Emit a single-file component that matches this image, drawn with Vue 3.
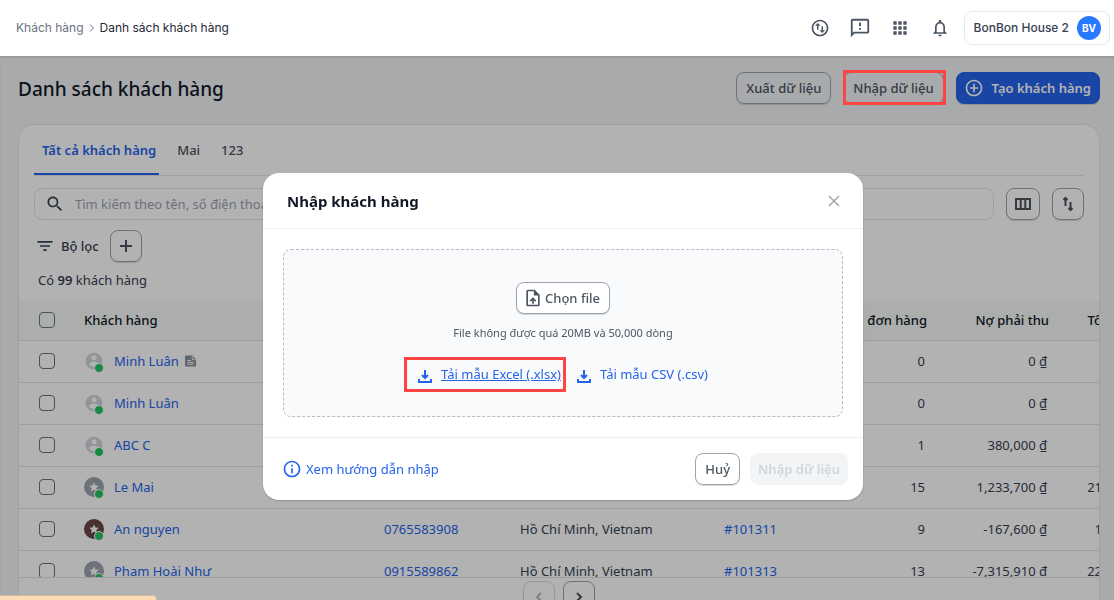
<template>
  <div class="app">
    <header class="topbar">
      <nav class="breadcrumb" aria-label="Breadcrumb">
        <a href="#">Khách hàng</a>
        <svg class="crumb-arrow" viewBox="0 0 8 8" aria-hidden="true"><path d="M2 0.500L5.500 4 2 7.500" /></svg>
        <span>Danh sách khách hàng</span>
      </nav>
      <div class="topbar-right">
        <button v-for="item in topIcons" :key="item.icon" class="icon-btn" :aria-label="item.label">
          <svg class="icon" :class="item.icon" viewBox="0 0 24 24"><path :d="icons[item.icon]" /></svg>
        </button>
        <button class="account">
          <span>BonBon House 2</span>
          <span class="account-avatar">BV</span>
        </button>
      </div>
    </header>

    <main class="page">
      <div class="page-head">
        <h1>Danh sách khách hàng</h1>
        <div class="page-actions">
          <button class="btn">Xuất dữ liệu</button>
          <div class="marked">
            <button class="btn" @click="showModal = true">Nhập dữ liệu</button>
          </div>
          <button class="btn btn-primary">
            <svg class="icon" viewBox="0 0 24 24"><path :d="icons.addCircle" /></svg>
            <span>Tạo khách hàng</span>
          </button>
        </div>
      </div>

      <section class="card">
        <div class="card-top">
          <div class="tabs" role="tablist">
            <button
              v-for="tab in tabs"
              :key="tab"
              class="tab"
              :class="{ active: tab === activeTab }"
              role="tab"
              :aria-selected="tab === activeTab"
              @click="activeTab = tab"
            >{{ tab }}</button>
          </div>

          <div class="search-row">
            <label class="search">
              <svg class="icon" viewBox="0 0 24 24"><path :d="icons.search" /></svg>
              <input v-model="keyword" type="text" aria-label="Tìm kiếm" placeholder="Tìm kiếm theo tên, số điện thoại, email khách hàng" />
            </label>
            <button class="btn btn-tool columns" aria-label="Cột hiển thị">
              <svg viewBox="0 0 16 14"><path d="M1 2h14v10H1zM5.7 2v10M10.3 2v10" /></svg>
            </button>
            <button class="btn btn-tool" aria-label="Sắp xếp">
              <svg viewBox="0 0 16 16"><path d="M5.500 10V2M3.500 4l2-2 2 2M10.500 6v8M8.500 12l2 2 2-2" /></svg>
            </button>
          </div>

          <div class="filter-row">
            <svg class="icon" viewBox="0 0 24 24"><path :d="icons.filter" /></svg>
            <span>Bộ lọc</span>
            <button class="btn btn-tool" aria-label="Thêm bộ lọc">
              <svg viewBox="0 0 16 16"><path d="M8 2v12M2 8h12" /></svg>
            </button>
          </div>
          <p class="count">Có <b>99</b> khách hàng</p>
        </div>

        <div class="table-wrap">
          <table>
            <colgroup>
              <col class="c-check" />
              <col class="c-name" />
              <col class="c-phone" />
              <col class="c-address" />
              <col class="c-last" />
              <col class="c-orders" />
              <col class="c-debt" />
              <col class="c-total" />
            </colgroup>
            <thead>
              <tr>
                <th><input type="checkbox" aria-label="Chọn tất cả" /></th>
                <th>Khách hàng</th>
                <th>Số điện thoại</th>
                <th>Địa chỉ</th>
                <th>Đơn cuối</th>
                <th class="num">đơn hàng</th>
                <th class="num">Nợ phải thu</th>
                <th class="num">Tổng chi tiêu</th>
              </tr>
            </thead>
            <tbody>
              <tr v-for="(c, i) in customers" :key="i">
                <td><input type="checkbox" :aria-label="'Chọn ' + c.name" /></td>
                <td>
                  <div class="customer">
                    <span class="avatar" :class="c.avatar">
                      <svg v-if="c.avatar === 'person'" viewBox="0 0 24 24"><path :d="icons.person" /></svg>
                      <svg v-else viewBox="0 0 24 24"><path :d="icons.star" /></svg>
                    </span>
                    <a href="#">{{ c.name }}</a>
                    <svg v-if="c.note" class="note" viewBox="0 0 12 12">
                      <path d="M1 0h7l4 4v8H0V1q0-1 1-1z" />
                      <path class="note-lines" d="M2.500 5.500h4M2.500 7.500h7M2.500 9.500h7M8 1v3.500h3.500" />
                    </svg>
                  </div>
                </td>
                <td><a href="#">{{ c.phone }}</a></td>
                <td>{{ c.address }}</td>
                <td><a href="#">{{ c.lastOrder }}</a></td>
                <td class="num">{{ c.orders }}</td>
                <td class="num">{{ c.debt }} ₫</td>
                <td class="num">{{ c.total }} ₫</td>
              </tr>
            </tbody>
          </table>
        </div>

        <div class="pager">
          <button class="btn btn-tool" disabled aria-label="Trang trước">
            <svg viewBox="0 0 16 16"><path d="M10 4L6 8l4 4" /></svg>
          </button>
          <button class="btn btn-tool" aria-label="Trang sau">
            <svg viewBox="0 0 16 16"><path d="M6 4l4 4-4 4" /></svg>
          </button>
        </div>
      </section>
    </main>

    <div v-if="showModal" class="overlay">
      <div class="modal" role="dialog" aria-modal="true" aria-labelledby="modal-title">
        <div class="modal-head">
          <h2 id="modal-title">Nhập khách hàng</h2>
          <button class="close" aria-label="Đóng" @click="showModal = false">
            <svg viewBox="0 0 12 12"><path d="M1 1l10 10M11 1L1 11" /></svg>
          </button>
        </div>
        <div class="modal-body">
          <div class="dropzone">
            <button class="btn btn-file">
              <svg class="icon" viewBox="0 0 24 24"><path :d="icons.upload" /></svg>
              <span>Chọn file</span>
            </button>
            <p class="hint">File không được quá 20MB và 50,000 dòng</p>
            <div class="templates">
              <a class="template marked" href="#">
                <svg viewBox="0 0 14 14"><path d="M7 1v7.500M4 6l3 3 3-3M1 10v3h12v-3" /></svg>
                <span class="underlined">Tải mẫu Excel (.xlsx)</span>
              </a>
              <a class="template" href="#">
                <svg viewBox="0 0 14 14"><path d="M7 1v7.500M4 6l3 3 3-3M1 10v3h12v-3" /></svg>
                <span>Tải mẫu CSV (.csv)</span>
              </a>
            </div>
          </div>
        </div>
        <div class="modal-foot">
          <a class="guide" href="#">
            <svg class="icon" viewBox="0 0 24 24"><path :d="icons.info" /></svg>
            <span>Xem hướng dẫn nhập</span>
          </a>
          <div class="modal-actions">
            <button class="btn" @click="showModal = false">Huỷ</button>
            <button class="btn btn-disabled" disabled>Nhập dữ liệu</button>
          </div>
        </div>
      </div>
    </div>

    <div class="notice"></div>
  </div>
</template>

<script setup>
import { ref } from 'vue';

const showModal = ref(true);
const keyword = ref('');
const tabs = ['Tất cả khách hàng', 'Mai', '123'];
const activeTab = ref(tabs[0]);

const topIcons = [
  { icon: 'transfer', label: 'Giao dịch' },
  { icon: 'feedback', label: 'Góp ý' },
  { icon: 'apps', label: 'Ứng dụng' },
  { icon: 'bell', label: 'Thông báo' }
];

const ring = 'M12 2C6.48 2 2 6.48 2 12s4.48 10 10 10 10-4.48 10-10S17.52 2 12 2zm0 18c-4.41 0-8-3.59-8-8s3.59-8 8-8 8 3.59 8 8-3.59 8-8 8z';

const icons = {
  transfer: ring + 'M9.300 6L6 9.300h2.400V14h1.800V9.300h2.400zM14.700 18l3.300-3.300h-2.400V10h-1.800v4.700h-2.400z',
  feedback: 'M20 2H4c-1.100 0-1.990.9-1.990 2L2 22l4-4h14c1.100 0 2-.9 2-2V4c0-1.100-.9-2-2-2zm0 14H5.170L4 17.170V4h16v12zm-9-4h2v2h-2zm0-6h2v4h-2z',
  apps: 'M4 8h4V4H4v4zm6 12h4v-4h-4v4zm-6 0h4v-4H4v4zm0-6h4v-4H4v4zm6 0h4v-4h-4v4zm6-10v4h4V4h-4zm-6 4h4V4h-4v4zm6 6h4v-4h-4v4zm0 6h4v-4h-4v4z',
  bell: 'M12 22c1.100 0 2-.9 2-2h-4c0 1.100.9 2 2 2zm6-6v-5c0-3.070-1.630-5.640-4.500-6.320V4c0-.83-.67-1.500-1.500-1.500s-1.500.67-1.500 1.500v.68C7.640 5.360 6 7.920 6 11v5l-2 2v1h16v-1l-2-2zm-2 1H8v-6c0-2.480 1.510-4.500 4-4.500s4 2.020 4 4.500v6z',
  addCircle: 'M13 7h-2v4H7v2h4v4h2v-4h4v-2h-4V7z' + ring,
  info: 'M11 7h2v2h-2zM11 11h2v6h-2z' + ring,
  search: 'M15.500 14h-.79l-.28-.27C15.410 12.590 16 11.110 16 9.500 16 5.910 13.090 3 9.500 3S3 5.910 3 9.500 5.910 16 9.500 16c1.610 0 3.090-.59 4.230-1.570l.27.28v.79l5 4.990L20.490 19l-4.990-5zm-6 0C7.010 14 5 11.990 5 9.500S7.010 5 9.500 5 14 7.010 14 9.500 11.990 14 9.500 14z',
  filter: 'M10 18h4v-2h-4v2zM3 6v2h18V6H3zm3 7h12v-2H6v2z',
  upload: 'M14 2H6c-1.100 0-1.990.9-1.990 2L4 20c0 1.100.89 2 1.990 2H18c1.100 0 2-.9 2-2V8l-6-6zm4 18H6V4h7v5h5v11zM8 15.010l1.410 1.410L11 14.840V19h2v-4.160l1.590 1.590L16 15.010 12.010 11z',
  person: 'M12 2C6.480 2 2 6.480 2 12s4.480 10 10 10 10-4.480 10-10S17.520 2 12 2zm0 3c1.660 0 3 1.340 3 3s-1.340 3-3 3-3-1.340-3-3 1.340-3 3-3zm0 14.200c-2.500 0-4.710-1.280-6-3.220.03-1.990 4-3.080 6-3.080 1.990 0 5.970 1.090 6 3.080-1.290 1.940-3.500 3.220-6 3.220z',
  star: 'M12 6.500l1.700 3.600 4 .5-2.900 2.700.7 4-3.500-1.900-3.500 1.900.7-4-2.900-2.700 4-.5z'
};

const city = 'Hồ Chí Minh, Vietnam';
const customers = [
  { name: 'Minh Luân', avatar: 'person', note: true, orders: 0, debt: '0', total: '0' },
  { name: 'Minh Luân', avatar: 'person', orders: 0, debt: '0', total: '0' },
  { name: 'ABC C', avatar: 'person', orders: 1, debt: '380,000', total: '0' },
  { name: 'Le Mai', avatar: 'gray', orders: 15, debt: '1,233,700', total: '21,450,000' },
  { name: 'An nguyen', avatar: 'brown', phone: '0765583908', address: city, lastOrder: '#101311', orders: 9, debt: '-167,600', total: '1,980,000' },
  { name: 'Phạm Hoài Như', avatar: 'gray', phone: '0915589862', address: city, lastOrder: '#101313', orders: 13, debt: '-7,315,910', total: '22,640,000' }
];
</script>

<style>
body { background: #f3f4f6; }
</style>

<style scoped>
.app {
  height: 100vh;
  overflow: hidden;
  font-family: "Noto Sans", "Open Sans", sans-serif;
  font-size: 13px;
  line-height: 20px;
  color: #374151;
}
* { box-sizing: border-box; }
h1, h2, p { margin: 0; }
button, input { font: inherit; color: inherit; }
button { cursor: pointer; }
a { color: #2563eb; text-decoration: none; }
svg { display: block; flex: none; fill: none; stroke: currentColor; }
.icon { width: 20px; height: 20px; fill: currentColor; stroke: none; }

.topbar {
  height: 56px;
  padding: 0 4px 0 16px;
  display: flex;
  align-items: center;
  justify-content: space-between;
  background: #fff;
  font-family: Inter, sans-serif;
  font-size: 12px;
}
.breadcrumb { display: flex; align-items: center; gap: 4px; color: #1f2937; }
.breadcrumb a { color: #6b7280; }
.crumb-arrow { width: 8px; height: 8px; color: #6b7280; }
.topbar-right { display: flex; align-items: center; color: #4b5563; }
.icon-btn {
  width: 40px;
  height: 40px;
  padding: 0;
  display: grid;
  place-items: center;
  border: 0;
  background: none;
}
.icon.feedback { width: 22px; height: 22px; }
.account {
  height: 34px;
  margin-left: 4px;
  padding: 0 8px 0 9px;
  display: flex;
  align-items: center;
  gap: 8px;
  border: 1px solid #e5e7eb;
  border-radius: 8px;
  background: #fff;
  font-weight: 500;
  color: #374151;
}
.account-avatar {
  width: 24px;
  height: 24px;
  border-radius: 50%;
  background: #2979ff;
  color: #fff;
  font-size: 10px;
  font-weight: 700;
  line-height: 24px;
}

.page { padding: 16px 14px 0 18px; }
.page-head { display: flex; align-items: center; justify-content: space-between; }
h1 { padding-top: 2px; font-size: 19px; line-height: 28px; font-weight: 500; color: #111827; }
.page-actions { display: flex; gap: 12px; }
.btn {
  height: 32px;
  padding: 0 9px;
  display: inline-flex;
  align-items: center;
  justify-content: center;
  border: 1px solid #9ca3af;
  border-radius: 8px;
  background: transparent;
  box-shadow: 0 1px 1px rgba(0, 0, 0, 0.15);
  font-weight: 500;
  color: #4b5563;
  white-space: nowrap;
}
.btn-primary {
  gap: 8px;
  padding: 0 8px 0 7px;
  border-color: #2563eb;
  background: #2563eb;
  color: #fff;
  font-weight: 600;
}
.btn-tool { width: 32px; padding: 0; }
.btn-tool svg { width: 16px; height: 16px; stroke-width: 2; }
.btn-tool.columns { width: 34px; }
.btn-tool.columns svg { height: 14px; }

/* khung đỏ đánh dấu */
.marked { position: relative; display: flex; }
.marked::after {
  content: "";
  position: absolute;
  z-index: 20;
  inset: -2px -2px -1px 0;
  border: 3px solid #ff4444;
  pointer-events: none;
}

.card {
  margin-top: 20px;
  border: 1px solid #e5e7eb;
  border-radius: 16px;
  background: #fff;
}
.card-top { padding: 0 15px; }
.tabs { display: flex; gap: 10px; border-bottom: 1px solid #e5e7eb; }
.tab {
  height: 50px;
  padding: 1px 3px 0 8px;
  border: 0;
  border-bottom: 2px solid transparent;
  background: none;
  font-weight: 500;
  color: #4b5563;
}
.tab.active { border-color: #2563eb; color: #2563eb; font-weight: 600; }
.search-row { display: flex; gap: 12px; margin-top: 12px; }
.search {
  flex: 1;
  height: 32px;
  padding: 0 10px;
  display: flex;
  align-items: center;
  gap: 10px;
  border: 1px solid #e0e4e8;
  border-radius: 8px;
}
.search input { flex: 1; padding: 0; border: 0; outline: 0; background: none; }
.search input::placeholder { color: #9ca3af; opacity: 1; }
.filter-row { display: flex; align-items: center; margin-top: 10px; }
.filter-row .icon { width: 22px; }
.filter-row span { margin: 0 11px 0 5px; font-weight: 500; }
.count { margin: 8px 4px 11px; }
.count b { font-weight: 600; }

.table-wrap {
  height: calc(100vh - 323px);
  overflow: hidden;
  border-bottom: 1px solid #e0e4e8;
}
table { width: 1158px; table-layout: fixed; border-collapse: separate; border-spacing: 0; }
.c-check { width: 55px; }
.c-name { width: 300px; }
.c-phone { width: 136px; }
.c-address { width: 204px; }
.c-last { width: 100px; }
.c-orders { width: 123px; }
.c-debt { width: 122px; }
.c-total { width: 118px; }
th, td { padding: 0 12px 2px 10px; border-bottom: 1px solid #e0e4e8; text-align: left; }
th { height: 40px; padding-right: 10px; background: #f5f9f8; font-weight: 500; color: #111827; }
td { height: 42px; }
.num { text-align: right; }
th:first-child, td:first-child { padding: 0 0 2px 20px; }
input[type="checkbox"] {
  appearance: none;
  display: block;
  width: 16px;
  height: 16px;
  margin: 0;
  border: 1px solid #6b7280;
  border-radius: 4px;
}
.customer { display: flex; align-items: center; gap: 10px; }
.avatar {
  position: relative;
  width: 20px;
  height: 20px;
  border-radius: 50%;
  color: #fff;
}
.avatar svg { width: 20px; height: 20px; fill: currentColor; stroke: none; }
.avatar::after {
  content: "";
  position: absolute;
  right: 0;
  bottom: -2px;
  width: 8px;
  height: 8px;
  border: 1px solid #fff;
  border-radius: 50%;
  background: #22c55e;
}
.avatar.person { color: #d1d5db; }
.avatar.gray { background: #9ca3af; }
.avatar.brown { background: #6b4545; }
.note { width: 11px; height: 12px; margin-left: -4px; fill: #8b929d; stroke: none; }
.note-lines { fill: none; stroke: #fff; }
.pager { display: flex; justify-content: center; gap: 8px; padding: 3px 0 12px; }
.pager .btn:disabled { opacity: 0.4; }

.overlay {
  position: fixed;
  z-index: 10;
  inset: 56px 0 0;
  padding: 17px 0 0 12px;
  display: flex;
  align-items: center;
  justify-content: center;
  background: rgba(0, 0, 0, 0.3);
  box-shadow: inset 0 2px 2px rgba(0, 0, 0, 0.1);
}
.modal { width: 600px; border-radius: 16px; background: #fff; box-shadow: 0 1px 2px rgba(0, 0, 0, 0.2); }
.modal-head {
  height: 56px;
  padding: 0 22px 0 24px;
  display: flex;
  align-items: center;
  justify-content: space-between;
  border-bottom: 1px solid #f0f1f3;
}
h2 { font-size: 15px; line-height: 22px; font-weight: 700; color: #111827; }
.close { padding: 0; border: 0; background: none; color: #a3a7ae; }
.close svg { width: 14px; height: 12px; stroke-width: 1.5; }
.modal-body { padding: 20px; }
.dropzone {
  padding: 32px 0 26px;
  display: flex;
  flex-direction: column;
  align-items: center;
  border: 1px dashed #b8bcc2;
  border-radius: 8px;
  background: #f9fafb;
}
.btn-file { gap: 2px; padding: 0 9px 0 6px; background: #fff; }
.hint { margin-top: 9px; font-size: 11px; color: #4b5563; }
.templates { display: flex; gap: 16px; margin-top: 15px; }
.template { display: flex; align-items: center; gap: 9px; height: 32px; }
.template svg { width: 14px; height: 14px; margin-top: 4px; stroke-width: 2; }
.template.marked::after { inset: -1px -5px -2px -14px; }
.underlined { text-decoration: underline; }
.modal-foot {
  height: 63px;
  padding: 0 15px 0 19px;
  display: flex;
  align-items: center;
  justify-content: space-between;
  border-top: 1px solid #eceef0;
}
.guide { display: flex; align-items: center; gap: 4px; }
.modal-actions { display: flex; gap: 10px; }
.btn-disabled { padding: 0 7px; border-color: #f3f4f6; background: #f3f4f6; color: #d1d5db; box-shadow: none; font-weight: 600; cursor: default; }

.notice {
  position: fixed;
  z-index: 20;
  left: 0;
  bottom: 0;
  width: 157px;
  height: 5px;
  border: 1px solid #c9b9a4;
  border-width: 1px 1px 0 0;
  border-top-right-radius: 4px;
  background: #fddcb5;
}
</style>
